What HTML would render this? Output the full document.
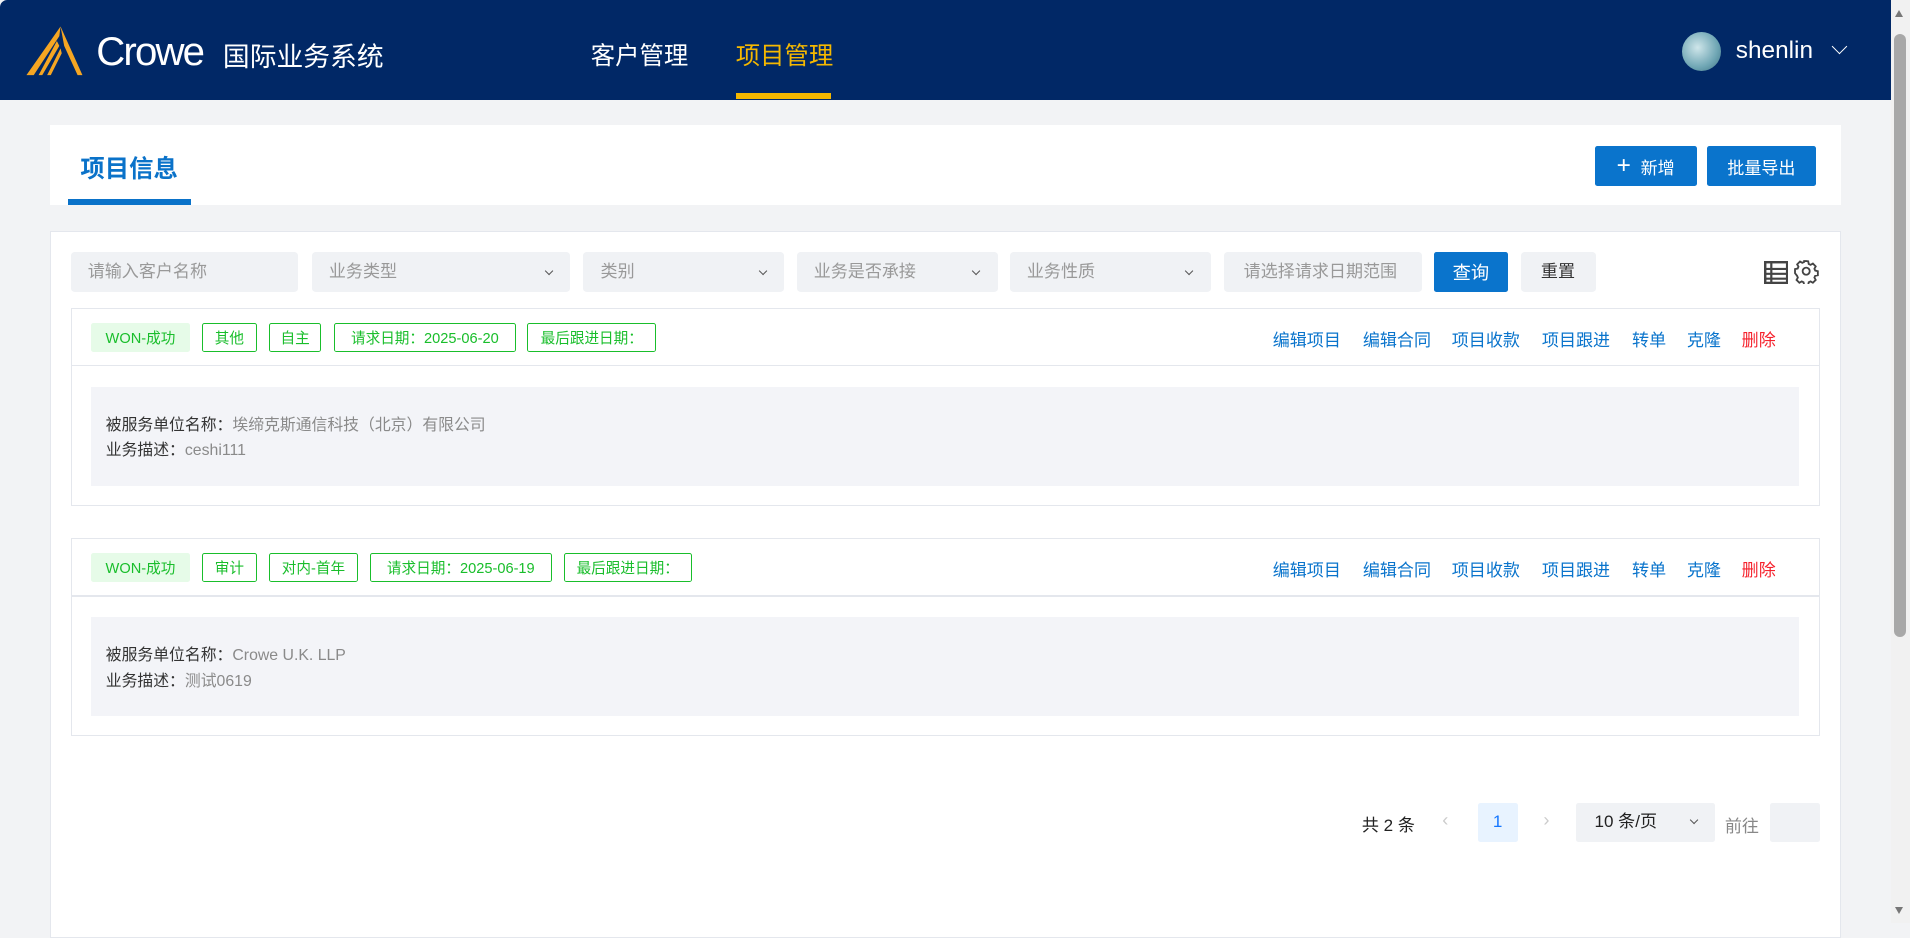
<!DOCTYPE html>
<html><head><meta charset="utf-8"><style>
html{zoom:1.21811}
*{box-sizing:border-box;margin:0;padding:0}
body{width:1568px;height:758px;overflow:hidden;background:#f2f3f5;font-family:"Liberation Sans","Noto Sans CJK SC",sans-serif;position:relative;color:#333}
.a{position:absolute}
.hdr{left:0;top:0;width:1552px;height:82px;background:#012866;border-top-left-radius:6px}
.nav{color:#fff;font-size:20px;top:30px}
.sb{left:1552px;top:0;width:16px;height:758px;background:#f1f1f1}
.card{background:#fff}
.btn{background:#0a74cc;color:#fff;font-size:14px;border-radius:2px;display:flex;align-items:center;justify-content:center}
.sel{background:#f0f2f5;border-radius:3px;height:33px;top:207px;font-size:14px;color:#999;padding-left:14px;line-height:33px}
.chev{position:absolute;right:15px;top:13px;width:5px;height:5px;border-right:1.2px solid #555;border-bottom:1.2px solid #555;transform:rotate(45deg)}
.pc{border:1px solid #e4e7ed;background:#fff;left:58px;width:1436px}
.tag{position:absolute;height:24px;font-size:12px;color:#19be2b;border:1px solid #19be2b;border-radius:2px;display:flex;align-items:center;justify-content:center}
.won{background:#e6fbe8;border-color:#e6fbe8}
.act{position:absolute;font-size:14px;color:#0a74cc;white-space:nowrap}
.gbox{position:absolute;left:16px;width:1402px;height:81px;background:#f3f4f8;font-size:13px;padding:21px 12px;line-height:21px}
.gbox span{color:#8a8a8a}
</style></head><body>
<div class="a hdr">
<svg class="a" style="left:20px;top:20px" width="50" height="44" viewBox="0 0 50 44"><path d="M30 2 L48 42 L44 42 L33 18 Z M30 2 L29 10 L8 42 L2 42 Z" fill="#f5a623"/><path d="M27 14 L12 42 L15 42 L29 18Z M30 20 L19 42 L22 42 L31 24Z" fill="#f5a623"/></svg>
<div class="a" style="left:79px;top:24px;color:#fff;font-size:33px;letter-spacing:-1.5px;font-weight:300">Crowe</div>
<div class="a" style="left:183px;top:29px;color:#fff;font-size:22px">国际业务系统</div>
<div class="a nav" style="left:485px">客户管理</div>
<div class="a nav" style="left:604px;color:#f5b800">项目管理</div>
<div class="a" style="left:604px;top:76px;width:78px;height:5px;background:#f5b800"></div>
<div class="a" style="left:1381px;top:26px;width:32px;height:32px;border-radius:50%;background:radial-gradient(circle at 40% 40%,#cfe6ea,#6fa6b4 60%,#3d6f80)"></div>
<div class="a" style="left:1425px;top:30px;color:#fff;font-size:20px">shenlin</div>
<div class="a" style="left:1506px;top:34px;width:9px;height:9px;border-right:1.5px solid #fff;border-bottom:1.5px solid #fff;transform:rotate(45deg)"></div>
</div>
<div class="a sb"><div class="a" style="left:3px;top:28px;width:10px;height:495px;background:#a8a8a8;border-radius:5px"></div>
<div class="a" style="left:4px;top:8px;border:4px solid transparent;border-bottom:6px solid #777;border-top:0"></div>
<div class="a" style="left:4px;top:745px;border:4px solid transparent;border-top:6px solid #777;border-bottom:0"></div></div>

<div class="a card" style="left:41px;top:103px;width:1470px;height:65px"></div>
<div class="a" style="left:66px;top:123px;font-size:20px;font-weight:bold;color:#0a72c9">项目信息</div>
<div class="a" style="left:56px;top:163px;width:101px;height:5px;background:#0a72c9"></div>
<div class="a btn" style="left:1309px;top:120px;width:84px;height:33px"><span style="font-size:20px;font-weight:300;margin-right:8px">+</span>新增</div>
<div class="a btn" style="left:1401px;top:120px;width:90px;height:33px">批量导出</div>

<div class="a card" style="left:41px;top:190px;width:1470px;height:580px;border:1px solid #e4e7ed"></div>
<div class="a sel" style="left:58px;width:187px">请输入客户名称</div>
<div class="a sel" style="left:256px;width:212px">业务类型<i class="chev"></i></div>
<div class="a sel" style="left:479px;width:165px">类别<i class="chev"></i></div>
<div class="a sel" style="left:654px;width:165px">业务是否承接<i class="chev"></i></div>
<div class="a sel" style="left:829px;width:165px">业务性质<i class="chev"></i></div>
<div class="a sel" style="left:1005px;width:162px;padding-left:16px">请选择请求日期范围</div>
<div class="a btn" style="left:1177px;top:207px;width:61px;height:33px;font-size:15px">查询</div>
<div class="a sel" style="left:1249px;width:61px;color:#333;padding-left:16px">重置</div>
<svg class="a" style="left:1448px;top:214px" width="20" height="19" viewBox="0 0 20 19"><rect x="1" y="1" width="18" height="17" fill="none" stroke="#444" stroke-width="2"/><path d="M1 6.5H19M1 10.5H19M1 14.5H19M6 1V18" stroke="#444" stroke-width="1.8"/></svg>
<svg class="a" style="left:1473px;top:213px" width="20" height="20" viewBox="0 0 24 24"><path d="M12 2l2 .3.5 2.6 1.8.9 2.3-1.3 2.8 2.8-1.3 2.3.8 1.8 2.6.6v4l-2.6.5-.8 1.8 1.3 2.3-2.8 2.8-2.3-1.3-1.8.8-.5 2.6h-4l-.6-2.6-1.8-.8-2.3 1.3-2.8-2.8 1.3-2.3-.8-1.8L1 14v-4l2.6-.6.8-1.8L3.1 5.3l2.8-2.8 2.3 1.3 1.8-.9L10 2z" fill="none" stroke="#444" stroke-width="1.8"/><circle cx="12" cy="12" r="3.5" fill="none" stroke="#444" stroke-width="1.8"/></svg>

<div class="a pc" style="top:253px;height:162px">
<div class="a" style="left:0;top:46px;width:100%;height:1px;background:#e4e7ed"></div>
<div class="tag won" style="left:16px;top:11px;width:81px">WON-成功</div>
<div class="tag" style="left:107px;top:11px;width:45px">其他</div>
<div class="tag" style="left:162px;top:11px;width:43px">自主</div>
<div class="tag" style="left:215px;top:11px;width:150px">请求日期：2025-06-20</div>
<div class="tag" style="left:374px;top:11px;width:106px">最后跟进日期：</div>
<div class="act" style="left:986px;top:14px">编辑项目</div><div class="act" style="left:1060px;top:14px">编辑合同</div><div class="act" style="left:1133px;top:14px">项目收款</div><div class="act" style="left:1207px;top:14px">项目跟进</div><div class="act" style="left:1281px;top:14px">转单</div><div class="act" style="left:1326px;top:14px">克隆</div><div class="act" style="left:1371px;top:14px;color:#f5222d">删除</div>
<div class="gbox" style="top:64px">被服务单位名称：<span>埃缔克斯通信科技（北京）有限公司</span><br>业务描述：<span>ceshi111</span></div>
</div>

<div class="a pc" style="top:442px;height:162px">
<div class="a" style="left:0;top:46px;width:100%;height:1px;background:#e4e7ed"></div>
<div class="tag won" style="left:16px;top:11px;width:81px">WON-成功</div>
<div class="tag" style="left:107px;top:11px;width:45px">审计</div>
<div class="tag" style="left:162px;top:11px;width:73px">对内-首年</div>
<div class="tag" style="left:245px;top:11px;width:149px">请求日期：2025-06-19</div>
<div class="tag" style="left:404px;top:11px;width:105px">最后跟进日期：</div>
<div class="act" style="left:986px;top:14px">编辑项目</div><div class="act" style="left:1060px;top:14px">编辑合同</div><div class="act" style="left:1133px;top:14px">项目收款</div><div class="act" style="left:1207px;top:14px">项目跟进</div><div class="act" style="left:1281px;top:14px">转单</div><div class="act" style="left:1326px;top:14px">克隆</div><div class="act" style="left:1371px;top:14px;color:#f5222d">删除</div>
<div class="gbox" style="top:64px">被服务单位名称：<span>Crowe U.K. LLP</span><br>业务描述：<span>测试0619</span></div>
</div>

<div class="a" style="left:1118px;top:666px;font-size:14px;color:#222">共 2 条</div>
<div class="a" style="left:1184px;top:664px;font-size:15px;color:#ccc">‹</div>
<div class="a" style="left:1213px;top:659px;width:33px;height:32px;background:#e8f3ff;border-radius:2px;color:#1677ff;font-size:14px;text-align:center;line-height:32px">1</div>
<div class="a" style="left:1267px;top:664px;font-size:15px;color:#ccc">›</div>
<div class="a" style="left:1294px;top:659px;width:114px;height:32px;background:#f0f2f5;border-radius:2px;font-size:14px;color:#222;line-height:32px;padding-left:15px">10 条/页<i class="chev" style="top:12px"></i></div>
<div class="a" style="left:1416px;top:667px;font-size:14px;color:#888">前往</div>
<div class="a" style="left:1453px;top:659px;width:41px;height:32px;background:#f0f2f5;border-radius:2px"></div>
</body></html>
